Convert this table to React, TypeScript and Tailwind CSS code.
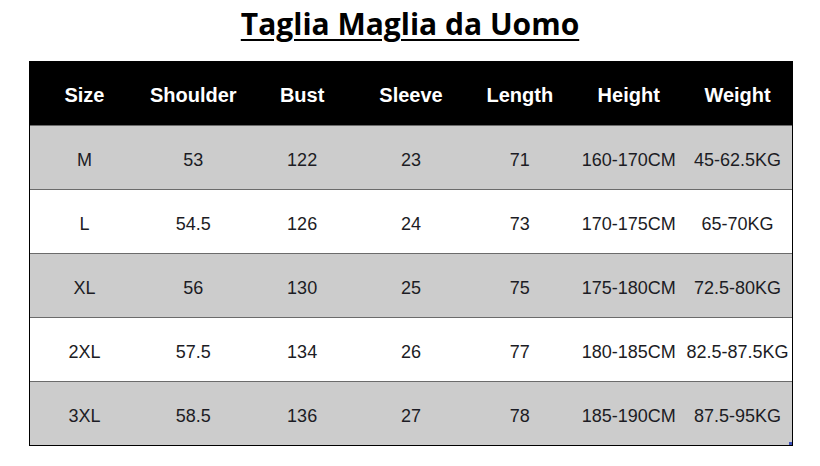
const headers = ["Size", "Shoulder", "Bust", "Sleeve", "Length", "Height", "Weight"];

const rows = [
  ["M", "53", "122", "23", "71", "160-170CM", "45-62.5KG"],
  ["L", "54.5", "126", "24", "73", "170-175CM", "65-70KG"],
  ["XL", "56", "130", "25", "75", "175-180CM", "72.5-80KG"],
  ["2XL", "57.5", "134", "26", "77", "180-185CM", "82.5-87.5KG"],
  ["3XL", "58.5", "136", "27", "78", "185-190CM", "87.5-95KG"],
];

export default function App() {
  return (
    <div className="w-[820px] h-[466px] bg-white overflow-hidden">
      <div className="h-[61px] flex justify-center pt-[4px]">
        <h1 className="text-[30px] leading-[40px] font-bold text-black underline decoration-2 underline-offset-[4px] font-['Open_Sans',sans-serif]">
          Taglia Maglia da Uomo
        </h1>
      </div>

      <div className="relative ml-[29px] w-[764px] border border-black font-['Liberation_Sans',Arial,sans-serif]">
        <div className="grid grid-cols-7 h-[63px] bg-black text-white text-[20px] font-bold">
          {headers.map((h) => (
            <div key={h} className="flex items-center justify-center pt-[2px]">
              {h}
            </div>
          ))}
        </div>
        {rows.map((r, i) => (
          <div
            key={r[0]}
            className={`grid grid-cols-7 h-[64px] border-t border-[#6b6b6b] text-[18px] text-[#1c1c24] ${
              i % 2 === 0 ? "bg-[#cccccc]" : "bg-white"
            }`}
          >
            {r.map((c, j) => (
              <div key={j} className="flex items-center justify-center pt-[5px] whitespace-nowrap">
                {c}
              </div>
            ))}
          </div>
        ))}
        <div className="absolute right-0 bottom-0 w-[3px] h-[3px] bg-[#3b4fb8]" />
      </div>
    </div>
  );
}
